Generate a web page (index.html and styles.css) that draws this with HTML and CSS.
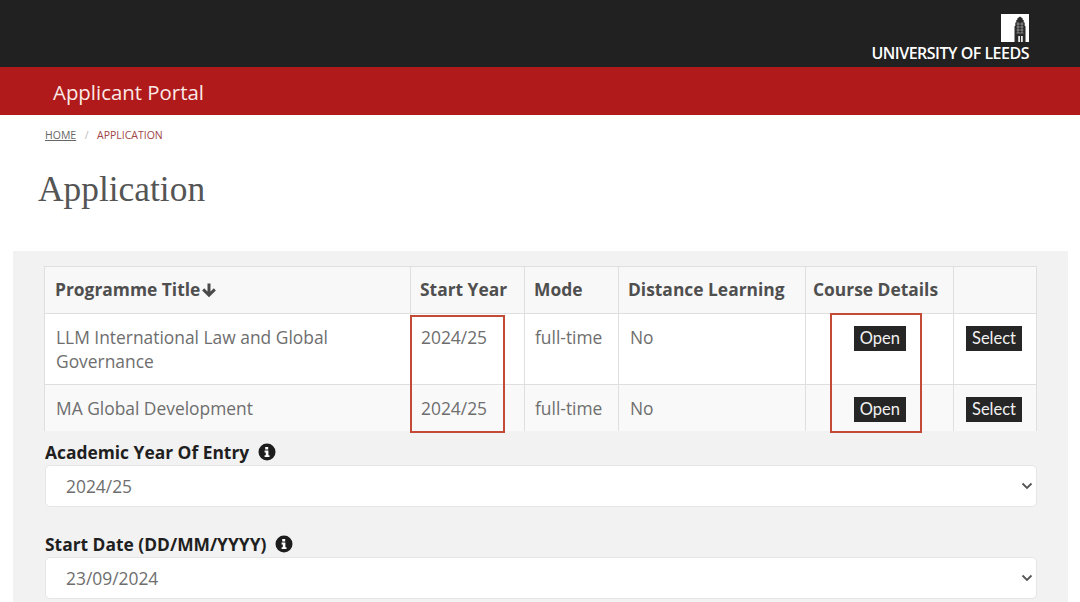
FILE: index.html
```html
<!DOCTYPE html>
<html lang="en">
<head>
<meta charset="utf-8">
<title>Application</title>
<link rel="stylesheet" href="styles.css">
</head>
<body>
<header class="top">
  <div class="brand">
    <svg class="crest" viewBox="0 0 28 28" width="28" height="28" aria-hidden="true">
      <rect width="28" height="28" fill="#fff"/>
      <path d="M13.5 28V12h.8V8.5h1V6h1V4.5L19 2.5l2.700 2V6h1v2.500h1V12h.8v16h-2.800v-6h-1.600v6h-1.200v-6h-1.600v6z" fill="#2a2a2a"/>
      <path d="M15.500 10h7M15.500 13h7M15.500 16h7M15.500 19h7M17 8v11M21 8v11" stroke="#bdbdbd" stroke-width=".6"/>
    </svg>
    <div class="wordmark">UNIVERSITY OF LEEDS</div>
  </div>
</header>
<div class="portal">Applicant Portal</div>
<nav class="crumbs"><a class="crumb-home">HOME</a><span class="sep">/</span><span class="crumb-current">APPLICATION</span></nav>
<h1 class="title">Application</h1>
<main class="panel">
  <div class="table-clip">
    <table class="programmes">
      <colgroup>
        <col class="c1"><col class="c2"><col class="c3"><col class="c4"><col class="c5"><col class="c6">
      </colgroup>
      <thead>
        <tr>
          <th>Programme Title<svg class="sort" viewBox="0 0 16 16" width="16" height="16" aria-hidden="true"><path d="M8 1.500v11.500M2.200 7.400 8 13.200l5.800-5.800" fill="none" stroke="#4a4a4a" stroke-width="3"/></svg></th>
          <th>Start Year</th><th>Mode</th><th>Distance Learning</th><th class="tight">Course Details</th><th></th>
        </tr>
      </thead>
      <tbody>
        <tr class="row-a">
          <td>LLM International Law and Global Governance</td><td>2024/25</td><td>full-time</td><td>No</td>
          <td class="act"><span class="btn">Open</span></td><td class="act"><span class="btn">Select</span></td>
        </tr>
        <tr class="row-b">
          <td>MA Global Development</td><td>2024/25</td><td>full-time</td><td>No</td>
          <td class="act"><span class="btn">Open</span></td><td class="act"><span class="btn">Select</span></td>
        </tr>
      </tbody>
    </table>
  </div>
  <div class="field first">
    <label class="label">Academic Year Of Entry <svg class="info" viewBox="0 0 18 18" width="18" height="18" aria-hidden="true"><circle cx="9" cy="9" r="8.500" fill="#1d1d1d"/><path d="M7.200 4h3v2.400h-3zM6.600 7.600h3.800v4.600h1.100V14H6.600v-1.800h1.200V9.400H6.600z" fill="#fff"/></svg></label>
    <div class="select">2024/25<svg class="chev" viewBox="0 0 12 8" width="12" height="8" aria-hidden="true"><path d="M1.500 1.500 6 6l4.500-4.500" fill="none" stroke="#555" stroke-width="1.800"/></svg></div>
  </div>
  <div class="field">
    <label class="label">Start Date (DD/MM/YYYY) <svg class="info" viewBox="0 0 18 18" width="18" height="18" aria-hidden="true"><circle cx="9" cy="9" r="8.500" fill="#1d1d1d"/><path d="M7.200 4h3v2.400h-3zM6.600 7.600h3.800v4.600h1.100V14H6.600v-1.800h1.200V9.400H6.600z" fill="#fff"/></svg></label>
    <div class="select">23/09/2024<svg class="chev" viewBox="0 0 12 8" width="12" height="8" aria-hidden="true"><path d="M1.500 1.500 6 6l4.500-4.500" fill="none" stroke="#555" stroke-width="1.800"/></svg></div>
  </div>
  <div class="mark mark-year"></div>
  <div class="mark mark-open"></div>
</main>
</body>
</html>
```
FILE: styles.css
```css
* { box-sizing: border-box; }
html, body { margin: 0; height: 602px; overflow: hidden; }
body { background: #fff; font-family: "Open Sans", sans-serif; color: #666; }

.top { height: 67px; background: #212121; display: flex; justify-content: flex-end; padding-right: 51px; }
.brand { display: flex; flex-direction: column; align-items: flex-end; padding-top: 14px; }
.crest { display: block; }
.wordmark { font-weight: 600; font-size: 16px; line-height: 20px; letter-spacing: -0.5px; color: #fff; margin-top: 1px; white-space: nowrap; }

.portal { height: 48px; background: #b01a1a; color: #fbe9e7; font-size: 20.4px; line-height: 51px; padding-left: 53px; }

.crumbs { height: 41px; padding: 13px 0 0 45px; font-size: 10.5px; line-height: 15px; display: flex; }
.crumb-home { color: #666; text-decoration: underline; }
.sep { color: #bbb; margin: 0 8.500px; }
.crumb-current { color: #a04545; }

.title { margin: 0 0 0 38px; height: 95px; padding-top: 9px; font-family: "Liberation Serif", serif; font-weight: 400; font-size: 35.4px; line-height: 48px; color: #555; }

.panel { position: relative; margin: 0 12px 0 13px; height: 351px; background: #f2f2f2; padding: 15px 30px 0 31px; }

.table-clip { height: 165px; overflow: hidden; }
.programmes { width: 992px; table-layout: fixed; border-collapse: collapse; font-size: 17.4px; line-height: 24px; }
.c1 { width: 366px; } .c2 { width: 114px; } .c3 { width: 94px; } .c4 { width: 187px; } .c5 { width: 148px; } .c6 { width: 83px; }
.programmes th, .programmes td { border: 1px solid #dfdfdf; vertical-align: top; text-align: left; }
.programmes th { height: 47px; padding: 10px; font-weight: 700; color: #4f4f4f; background: #f8f8f8; white-space: nowrap; }
.programmes th:nth-child(n+2) { padding-left: 9px; }
.programmes th.tight { padding-left: 7px; }
.programmes td { padding: 11px; color: #6e6e6e; }
.programmes td:nth-child(2), .programmes td:nth-child(3) { padding-left: 10px; }
.row-a td { background: #fff; height: 71px; }
.row-b td { background: #f9f9f9; height: 47px; }
.sort { vertical-align: -2px; margin-left: 1px; }
.programmes td.act { text-align: right; padding: 12px 14px 0 0; }
.programmes td.act:nth-child(5) { padding-right: 47px; }
.btn { display: inline-block; background: #262626; color: #f2f2f2; font-family: "Lato", sans-serif; font-size: 16.5px; line-height: 25px; padding: 0 6px; vertical-align: top; }

.field { margin: 25px 1px 0 1px; }
.field.first { margin-top: 9px; }
.label { display: block; font-weight: 700; font-size: 17.4px; line-height: 24px; color: #1f1f1f; }
.info { vertical-align: -2px; margin-left: 4px; }
.select { position: relative; height: 42px; margin-top: 1px; background: #fff; border: 1px solid #e6e6e6; border-radius: 5px; padding-left: 20px; font-size: 17.4px; line-height: 41px; color: #6e6e6e; }
.chev { position: absolute; right: 3px; top: 16px; }

.mark { position: absolute; border: 2px solid #c24a36; }
.mark-year { left: 397px; top: 64px; width: 95px; height: 118px; }
.mark-open { left: 817px; top: 62px; width: 92px; height: 120px; }
```
